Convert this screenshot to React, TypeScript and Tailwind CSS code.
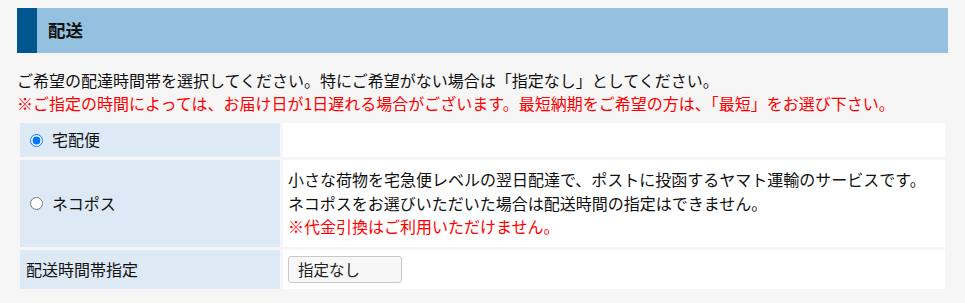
export default function App() {
  return (
    <div
      className="min-h-[303px] w-full bg-[#f6f6f6] px-[17px] pt-[8px] text-[16px] text-[#111]"
      style={{ fontFamily: '"Noto Sans CJK JP", "Noto Sans", sans-serif' }}
    >
      {/* Section header */}
      <div className="flex h-[45px] items-center bg-[#95c1e0]">
        <div className="h-full w-[20px] bg-[#00568f]" />
        <h2 className="pl-[11px] text-[17.5px] font-bold text-[#111]">配送</h2>
      </div>

      <div className="mt-[16px] leading-[23px]">
        <p>ご希望の配達時間帯を選択してください。特にご希望がない場合は「指定なし」としてください。</p>
        <p className="text-[#ff0000]">
          ※ご指定の時間によっては、お届け日が1日遅れる場合がございます。最短納期をご希望の方は、「最短」をお選び下さい。
        </p>
      </div>

      {/* Delivery options */}
      <div className="mt-[5px] grid grid-cols-[260px_1fr] grid-rows-[34px_87px_39px] gap-[3px] p-[3px] leading-[23.5px]">
        <label className="flex items-center bg-[#dde9f5] pl-[10px]">
          <input type="radio" name="ship" defaultChecked className="m-0 h-[13px] w-[13px]" />
          <span className="ml-[9px]">宅配便</span>
        </label>
        <div className="bg-white" />

        <label className="flex items-center bg-[#dde9f5] pl-[10px]">
          <input type="radio" name="ship" className="m-0 h-[13px] w-[13px]" />
          <span className="ml-[9px]">ネコポス</span>
        </label>
        <div className="flex flex-col justify-center bg-white pl-[5px]">
          <p>小さな荷物を宅急便レベルの翌日配達で、ポストに投函するヤマト運輸のサービスです。</p>
          <p>ネコポスをお選びいただいた場合は配送時間の指定はできません。</p>
          <p className="text-[#ff0000]">※代金引換はご利用いただけません。</p>
        </div>

        <div className="flex items-center bg-[#dde9f5] pl-[6px]">配送時間帯指定</div>
        <div className="flex items-center bg-white pl-[5px]">
          <div className="flex h-[27px] w-[114px] items-center rounded-[3px] border border-[#c8c8c8] bg-[#f7f7f7] pl-[9px] text-[15.5px] text-[#222]">
            指定なし
          </div>
        </div>
      </div>
    </div>
  );
}
